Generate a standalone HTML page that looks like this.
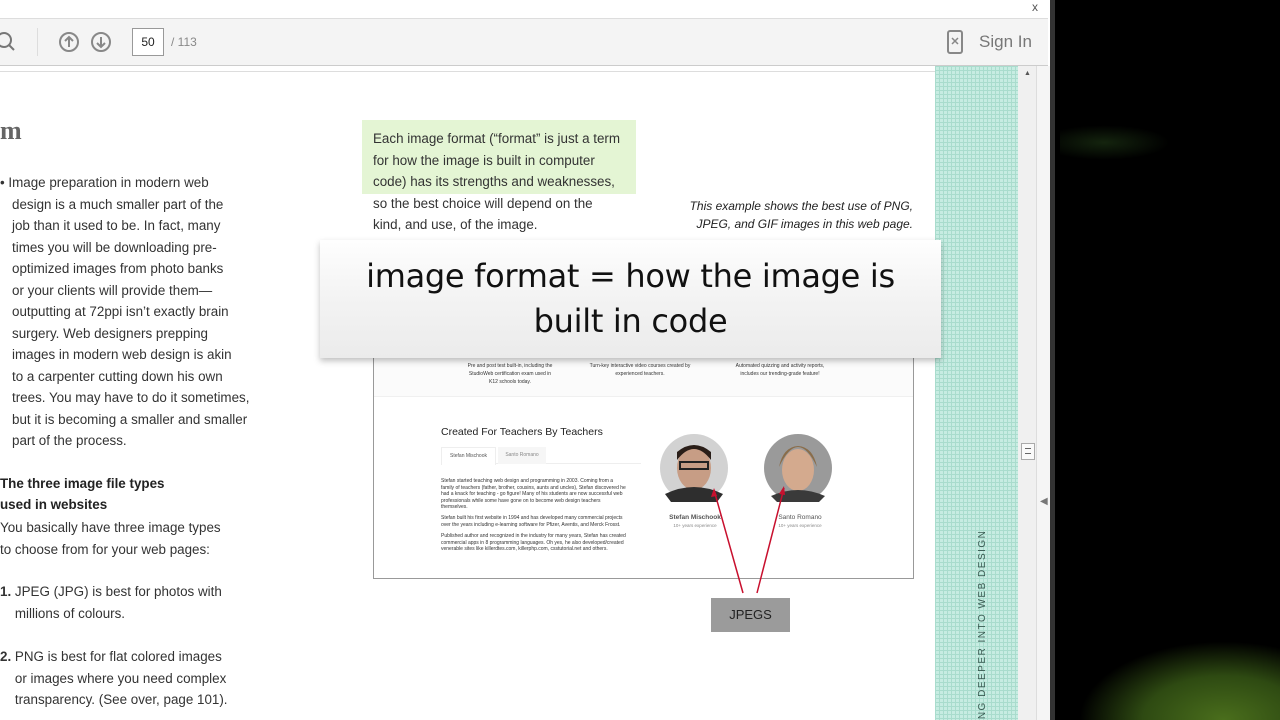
<!DOCTYPE html>
<html style="overflow:hidden;height:720px"><head><meta charset="utf-8"><style>
*{margin:0;padding:0;box-sizing:border-box}
body{width:1280px;height:720px;overflow:hidden;position:relative;background:#000;font-family:"Liberation Sans",sans-serif}
.a{position:absolute;white-space:nowrap}
.t{font-size:13.4px;color:#333}
.s{font-size:5px;color:#333}
</style></head><body>
<div class="a" style="left:1055px;top:0;width:225px;height:720px;background:#000"></div>
<div class="a" style="left:1060px;top:125px;width:110px;height:35px;background:radial-gradient(ellipse at 40% 50%,#14240e,#000 70%)"></div>
<div class="a" style="left:1055px;top:580px;width:225px;height:140px;background:radial-gradient(ellipse 80% 70% at 75% 100%,#4a6e1c 0%,#2e4a12 45%,#000 80%)"></div>
<div class="a" style="left:1050px;top:0;width:5px;height:720px;background:#333"></div>
<div class="a" style="left:0;top:0;width:1050px;height:720px;background:#fff"></div>
<div class="a" style="left:0;top:18px;width:1048px;height:48px;background:#f4f4f4;border-top:1px solid #ddd;border-bottom:1px solid #ccc"></div>
<div class="a" style="left:1032px;top:0;font-size:12px;color:#555">x</div>
<svg class="a" style="left:0;top:30px" width="18" height="24"><circle cx="4" cy="10" r="7" fill="none" stroke="#777" stroke-width="2"/><line x1="9" y1="15" x2="14" y2="20" stroke="#777" stroke-width="2"/></svg>
<div class="a" style="left:37px;top:28px;width:1px;height:28px;background:#ddd"></div>
<svg class="a" style="left:58px;top:31px" width="54" height="22"><circle cx="11" cy="11" r="9" fill="none" stroke="#888" stroke-width="2"/><path d="M11 16V6M7 10l4-4 4 4" fill="none" stroke="#888" stroke-width="2"/><circle cx="43" cy="11" r="9" fill="none" stroke="#888" stroke-width="2"/><path d="M43 6v10M39 12l4 4 4-4" fill="none" stroke="#888" stroke-width="2"/></svg>
<div class="a" style="left:132px;top:28px;width:32px;height:28px;background:#fff;border:1px solid #999;font-size:12px;text-align:center;line-height:26px;color:#222">50</div>
<div class="a" style="left:171px;top:35px;font-size:12px;color:#888">/ 113</div>
<svg class="a" style="left:946px;top:29px" width="18" height="26"><rect x="2" y="2" width="14" height="22" rx="2" fill="none" stroke="#888" stroke-width="2"/><path d="M6 9l6 6M12 9l-6 6" stroke="#888" stroke-width="1.5"/></svg>
<div class="a" style="left:979px;top:32px;font-size:17px;color:#777">Sign In</div>
<div class="a" style="left:0;top:68px;width:935px;height:4px;border-bottom:1px solid #ddd"></div>
<div class="a" style="left:935px;top:66px;width:83px;height:654px;overflow:hidden;background-color:#c7ece2;background-image:linear-gradient(#a9dccd 1px,transparent 1px),linear-gradient(90deg,#a9dccd 1px,transparent 1px);background-size:4px 4px">
<div class="a" style="left:-58px;top:564px;width:212px;height:12px;font-size:10px;line-height:12px;letter-spacing:1.5px;color:#3a5a52;transform:rotate(-90deg);transform-origin:center">GGING DEEPER INTO WEB DESIGN</div>
</div>
<div class="a" style="left:1018px;top:66px;width:18px;height:654px;background:#f0f0f0"></div>
<div class="a" style="left:1036px;top:66px;width:14px;height:654px;background:#f5f5f5;border-left:1px solid #ddd"></div>
<div class="a" style="left:1024px;top:70px;font-size:7px;color:#555">▲</div>
<div class="a" style="left:1021px;top:443px;width:14px;height:17px;background:#fafafa;border:1px solid #aaa"></div>
<div class="a" style="left:1025px;top:448px;width:6px;height:6px;border-top:1px solid #666;border-bottom:1px solid #666"></div>
<div class="a" style="left:1040px;top:496px;font-size:10px;color:#777">◀</div>
<div class="a" style="left:0;top:116px;font-size:26px;color:#666;font-family:'Liberation Serif',serif;font-weight:bold">m</div>
<div class="a t" style="left:0;top:172px;line-height:21.5px">• Image preparation in modern web</div>
<div class="a t" style="left:12px;top:193.5px;line-height:21.5px">design is a much smaller part of the<br>job than it used to be. In fact, many<br>times you will be downloading pre-<br>optimized images from photo banks<br>or your clients will provide them—<br>outputting at 72ppi isn’t exactly brain<br>surgery. Web designers prepping<br>images in modern web design is akin<br>to a carpenter cutting down his own<br>trees. You may have to do it sometimes,<br>but it is becoming a smaller and smaller<br>part of the process.</div>
<div class="a t" style="left:0;top:473px;line-height:21px;font-weight:bold;color:#222">The three image file types<br>used in websites</div>
<div class="a t" style="left:0;top:517px;line-height:21.5px">You basically have three image types<br>to choose from for your web pages:</div>
<div class="a t" style="left:0;top:581px;line-height:21.5px"><b>1.</b> JPEG (JPG) is best for photos with<br>&nbsp;&nbsp;&nbsp;&nbsp;millions of colours.</div>
<div class="a t" style="left:0;top:646px;line-height:21.5px"><b>2.</b> PNG is best for flat colored images<br>&nbsp;&nbsp;&nbsp;&nbsp;or images where you need complex<br>&nbsp;&nbsp;&nbsp;&nbsp;transparency. (See over, page 101).</div>
<div class="a" style="left:362px;top:120px;width:274px;height:74px;background:#e4f5d4"></div>
<div class="a t" style="left:373px;top:128px;line-height:21.5px">Each image format (“format” is just a term<br>for how the image is built in computer<br>code) has its strengths and weaknesses,<br>so the best choice will depend on the<br>kind, and use, of the image.</div>
<div class="a" style="left:660px;top:197px;width:253px;text-align:right;font-size:12px;font-style:italic;line-height:18px;color:#222">This example shows the best use of PNG,<br>JPEG, and GIF images in this web page.</div>
<div class="a" style="left:373px;top:340px;width:541px;height:239px;border:1px solid #999;border-top:none;background:#fff"></div>
<div class="a" style="left:374px;top:340px;width:539px;height:57px;background:#fbfbfb;border-bottom:1px solid #f0f0f0"></div>
<div class="a s" style="left:455px;top:362px;width:110px;text-align:center;line-height:8px">Pre and post test built-in, including the<br>StudioWeb certification exam used in<br>K12 schools today.</div>
<div class="a s" style="left:580px;top:362px;width:120px;text-align:center;line-height:8px">Turn-key interactive video courses created by<br>experienced teachers.</div>
<div class="a s" style="left:720px;top:362px;width:120px;text-align:center;line-height:8px">Automated quizzing and activity reports,<br>includes our trending-grade feature!</div>
<div class="a" style="left:441px;top:426px;font-size:10.5px;color:#222">Created For Teachers By Teachers</div>
<div class="a" style="left:441px;top:447px;width:200px;height:17px;border-bottom:1px solid #eee"></div>
<div class="a" style="left:441px;top:447px;width:55px;height:18px;border:1px solid #eee;border-bottom:none;background:#fff;font-size:5px;color:#555;line-height:17px;text-align:center">Stefan Mischook</div>
<div class="a" style="left:498px;top:447px;width:48px;height:17px;background:#f6f6f6;font-size:5px;color:#888;line-height:17px;text-align:center">Santo Romano</div>
<div class="a s" style="left:441px;top:478px;line-height:6.5px">Stefan started teaching web design and programming in 2003. Coming from a<br>family of teachers (father, brother, cousins, aunts and uncles), Stefan discovered he<br>had a knack for teaching - go figure! Many of his students are now successful web<br>professionals while some have gone on to become web design teachers<br>themselves.</div>
<div class="a s" style="left:441px;top:515px;line-height:6.5px">Stefan built his first website in 1994 and has developed many commercial projects<br>over the years including e-learning software for Pfizer, Aventis, and Merck Frosst.</div>
<div class="a s" style="left:441px;top:533px;line-height:6.5px">Published author and recognized in the industry for many years, Stefan has created<br>commercial apps in 8 programming languages. Oh yes, he also developed/created<br>venerable sites like killerdtes.com, killerphp.com, csstutorial.net and others.</div>
<svg class="a" style="left:655px;top:432px" width="185" height="80">
<circle cx="39" cy="36" r="34" fill="#d2d2d2"/><ellipse cx="39" cy="36" rx="17" ry="22" fill="#c79d85"/><path d="M22 28q17-22 34 0v-8q-17-14-34 0z" fill="#2a1e18"/><rect x="25" y="30" width="28" height="7" fill="none" stroke="#222" stroke-width="2"/><path d="M10 62q29-14 58 0l-6 8H16z" fill="#2e2e2e"/>
<circle cx="143" cy="36" r="34" fill="#9a9a9a"/><ellipse cx="143" cy="38" rx="16" ry="21" fill="#d4aa8e"/><path d="M124 35q19-40 38 0q-4-20-19-21q-15 1-19 21z" fill="#8a6d4a"/><path d="M116 64q27-12 54 0l-6 6h-42z" fill="#3a3a3a"/>
</svg>
<div class="a" style="left:665px;top:514px;width:60px;text-align:center;font-size:6.5px;color:#555;font-weight:bold">Stefan Mischook</div>
<div class="a" style="left:665px;top:523px;width:60px;text-align:center;font-size:4.5px;color:#888">10+ years experience</div>
<div class="a" style="left:770px;top:514px;width:60px;text-align:center;font-size:6.5px;color:#555">Santo Romano</div>
<div class="a" style="left:770px;top:523px;width:60px;text-align:center;font-size:4.5px;color:#888">10+ years experience</div>
<svg class="a" style="left:700px;top:480px" width="100" height="120"><path d="M43 113L14 10M57 113L84 8" stroke="#c8102e" stroke-width="1.5" fill="none"/><path d="M14 8l-3 9 6-1z M84 6l-5 8 6 1z" fill="#c8102e"/></svg>
<div class="a" style="left:711px;top:598px;width:79px;height:34px;background:#9b9b9b;font-size:13px;color:#222;text-align:center;line-height:33px">JPEGS</div>
<div class="a" style="left:320px;top:240px;width:621px;height:118px;background:linear-gradient(#fefefe,#f3f3f3 50%,#ebebeb);box-shadow:0 3px 6px rgba(0,0,0,.25)"></div>
<div class="a" style="left:320px;top:254px;width:621px;text-align:center;font-size:32px;line-height:45px;color:#111;font-family:'DejaVu Sans','Liberation Sans',sans-serif;letter-spacing:-0.3px;white-space:normal">image format = how the image is<br>built in code</div>
</body></html>
